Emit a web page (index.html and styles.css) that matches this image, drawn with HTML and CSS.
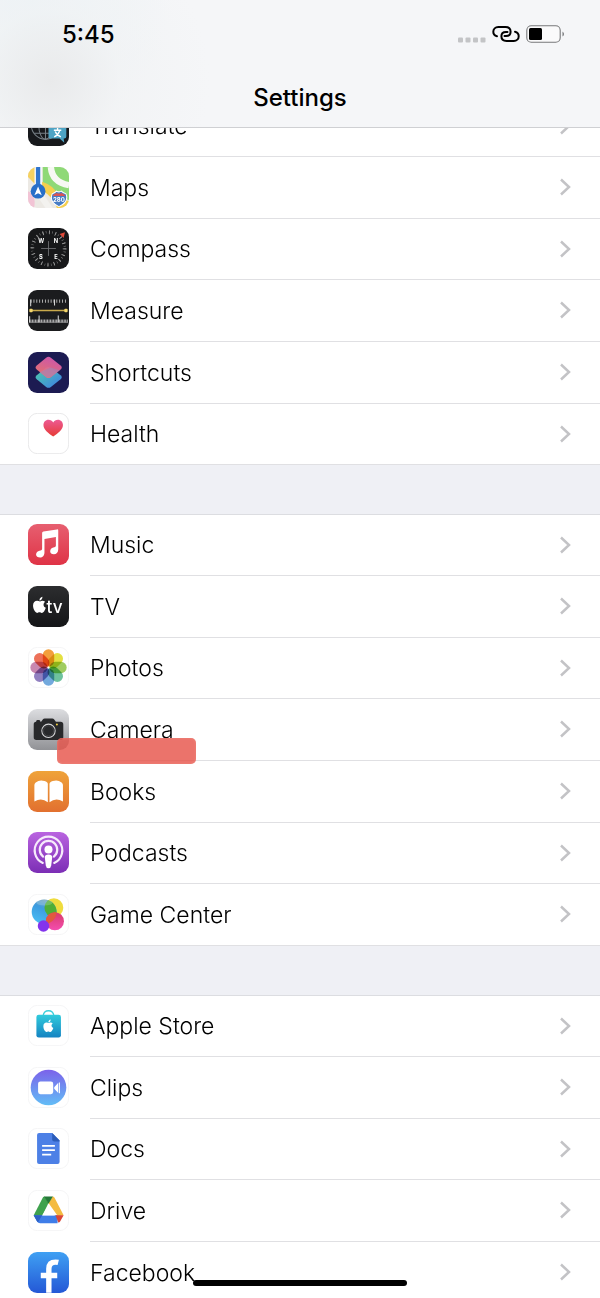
FILE: index.html
```html
<!DOCTYPE html>
<html lang="en">
<head>
    <meta charset="UTF-8">
    <meta name="viewport" content="width=device-width, initial-scale=1.0">
    <title>Settings</title>
    <link rel="stylesheet" href="styles.css">
</head>
<body>
    <header class="header">
        <div class="status">
            <span class="time">5:45</span>
            <div class="status-icons">
                <svg class="signal" viewBox="0 0 28 6"><g fill="#c3c4c6"><rect width="5" height="5" rx="1" y=".5"/><rect x="7.500" width="5" height="5" rx="1" y=".5"/><rect x="15" width="5" height="5" rx="1" y=".5"/><rect x="22.500" width="5" height="5" rx="1" y=".5"/></g></svg>
                <svg class="link" viewBox="0 0 28 18" fill="none" stroke="#000" stroke-width="2" stroke-linecap="round"><path d="M5 11.300C2.500 10.700 1.300 9 1.300 6.800 1.300 4 3.400 2 6.200 2h7.200c3.200 0 5.200 2 5.200 4.700 0 2.900-2.100 4.300-4.600 4.300H12.500"/><path d="M23 6.700c2.500.6 3.700 2.300 3.700 4.500 0 2.800-2.100 4.800-4.900 4.800h-7.200c-3.200 0-5.200-2-5.200-4.700 0-2.900 2.100-4.300 4.600-4.300h1.500"/></svg>
                <svg class="battery" viewBox="0 0 39 18"><rect x=".8" y=".8" width="33.400" height="16.400" rx="4.500" fill="#fafafb" stroke="#77787a" stroke-width="1.100"/><rect x="3" y="3" width="13" height="12" rx="1.500"/><path d="M36.500 6.500q1.500 1 1.500 2.500t-1.500 2.500z" fill="#77787a"/></svg>
            </div>
        </div>
        <h1 class="title">Settings</h1>
    </header>

    <main class="settings">
        <nav class="group">
            <a class="row" href="#translate">
                <svg class="icon" viewBox="0 0 122 122"><rect width="122" height="122" rx="27" fill="#17191c"/><g fill="none" stroke="#788087" stroke-width="3"><circle cx="52" cy="60" r="42"/><ellipse cx="52" cy="60" rx="20" ry="42"/><path d="M52 21v81M13 60h78M18 84h64M20 38h64"/></g><path d="M66 56h42q6 0 6 6v32q0 6-6 6h-2l2 12-14-12H66q-5 0-5-6V62q0-6 5-6z" fill="#4da3c4"/><path d="M88 68v6M77 75h22M94 77q-4 13-16 18M81 79q5 12 17 16" fill="none" stroke="#fff" stroke-width="4"/></svg>
                <span class="label">Translate</span>
                <svg class="chevron" viewBox="0 0 12 18"><path d="M2 1.500 10 9l-8 7.500"/></svg>
            </a>
            <a class="row" href="#maps">
                <svg class="icon" viewBox="0 0 122 122">
                    <clipPath id="tile"><rect width="122" height="122" rx="27"/></clipPath>
                    <g clip-path="url(#tile)">
                        <rect width="122" height="122" fill="#ece9e4"/>
                        <path d="M44 0h78v100L44 50z" fill="#8fd977"/>
                        <path d="M0 0h22v52L0 30z" fill="#f5d160"/>
                        <path d="M0 72q26 10 18 50H0z" fill="#f2c4d5"/>
                        <path d="M24 82l28 40h22L44 78z" fill="#f3f2ef"/>
                        <path d="M42 44q38 12 50 44l30 14v20H86Q74 88 42 70z" fill="#f6cf4e"/>
                        <path d="M68 0q4 46 54 54" fill="none" stroke="#f8f8f4" stroke-width="19"/>
                        <path d="M30 0v72" stroke="#fff" stroke-width="21"/><path d="M30 0v72" stroke="#2f75ce" stroke-width="13"/>
                        <circle cx="30" cy="72" r="22" fill="#286fc9"/><path d="M30 58l11 26-11-6-11 6z" fill="#fff"/>
                        <path d="M72 80q9-4 13-8 8 4 14 0 4 4 14 8 10 24-21 38-30-14-20-38z" fill="#477cc4" stroke="#fff" stroke-width="3"/><path d="M73 86q2-5 12-9 8 4 15 0 9 4 12 9z" fill="#d95454"/>
                        <text x="92" y="105" class="shield">280</text>
                    </g>
                </svg>
                <span class="label">Maps</span>
                <svg class="chevron" viewBox="0 0 12 18"><path d="M2 1.500 10 9l-8 7.500"/></svg>
            </a>
            <a class="row" href="#compass">
                <svg class="icon" viewBox="0 0 122 122"><rect width="122" height="122" rx="27" fill="#17181a"/><circle cx="61" cy="61" r="48" fill="none" stroke="#a8a8a8" stroke-width="11" stroke-dasharray="2.500 16.350"/><circle cx="61" cy="61" r="49" fill="none" stroke="#8a8a8a" stroke-width="7" stroke-dasharray="1.500 8.121"/><path d="M61 39v44M39 61h44" stroke="#727476" stroke-width="2.500"/><path d="M94 18l16-5-4 17z" fill="#e14a3a"/><g class="points"><text x="39" y="45">W</text><text x="83" y="45">N</text><text x="38" y="93">S</text><text x="83" y="93">E</text></g></svg>
                <span class="label">Compass</span>
                <svg class="chevron" viewBox="0 0 12 18"><path d="M2 1.500 10 9l-8 7.500"/></svg>
            </a>
            <a class="row" href="#measure">
                <svg class="icon" viewBox="0 0 122 122"><rect width="122" height="122" rx="27" fill="#1b1c1e"/><path d="M8 33h108" stroke="#c8c8c8" stroke-width="10" stroke-dasharray="2.500 6"/><path d="M8 28v20M79 28v18" stroke="#ddd" stroke-width="3"/><path d="M3 92h116" stroke="#c8c8c8" stroke-width="9" stroke-dasharray="2.500 2"/><path d="M3 96h116" stroke="#aaa" stroke-width="2"/><path d="M5 78v18M33 76v20M90 76v20" stroke="#ddd" stroke-width="3"/><path d="M12 61h100" stroke="#c9aa4c" stroke-width="4"/><rect x="4" y="56" width="10" height="10" rx="3" fill="#f3d66c"/><rect x="108" y="56" width="10" height="10" rx="3" fill="#f3d66c"/></svg>
                <span class="label">Measure</span>
                <svg class="chevron" viewBox="0 0 12 18"><path d="M2 1.500 10 9l-8 7.500"/></svg>
            </a>
            <a class="row" href="#shortcuts">
                <svg class="icon" viewBox="0 0 122 122">
                    <linearGradient id="sc-low" x1="0" y1="0" x2="1" y2="1"><stop offset="0" stop-color="#4dd0a8"/><stop offset="1" stop-color="#3e7be8"/></linearGradient>
                    <linearGradient id="sc-high" x1=".8" y1="0" x2=".3" y2="1"><stop offset="0" stop-color="#d458b4"/><stop offset="1" stop-color="#f0776e"/></linearGradient>
                    <rect width="122" height="122" rx="27" fill="#1c1b52"/>
                    <path d="M54 47q7-5 14 0l29 22q7 6 0 12l-29 23q-7 5-14 0L26 81q-7-6 0-12z" fill="url(#sc-low)"/>
                    <path d="M54 17q7-5 14 0l29 23q7 6 0 12L68 75q-7 5-14 0L26 52q-7-6 0-12z" fill="url(#sc-high)" opacity=".95"/>
                    <path d="M68 46l27 8-26 20q-8 5-16 0L34 60z" fill="#a582b4" opacity=".65"/>
                </svg>
                <span class="label">Shortcuts</span>
                <svg class="chevron" viewBox="0 0 12 18"><path d="M2 1.500 10 9l-8 7.500"/></svg>
            </a>
            <a class="row" href="#health">
                <svg class="icon" viewBox="0 0 122 122">
                    <linearGradient id="heart" x2="0" y2="1"><stop offset="0" stop-color="#ed5a94"/><stop offset="1" stop-color="#e63b35"/></linearGradient>
                    <rect class="outline strong" x="1" y="1" width="120" height="120" rx="27"/>
                    <path d="M75 70C60 60 46 50 46 36c0-9 6-16 15-16 6 0 11 3 14 8 3-5 8-8 14-8 9 0 15 7 15 16 0 14-14 24-29 34z" fill="url(#heart)"/>
                </svg>
                <span class="label">Health</span>
                <svg class="chevron" viewBox="0 0 12 18"><path d="M2 1.500 10 9l-8 7.500"/></svg>
            </a>
        </nav>

        <nav class="group">
            <a class="row" href="#music">
                <svg class="icon" viewBox="0 0 122 122">
                    <linearGradient id="music" x2="0" y2="1"><stop offset="0" stop-color="#e75f70"/><stop offset="1" stop-color="#df3346"/></linearGradient>
                    <rect width="122" height="122" rx="27" fill="url(#music)"/>
                    <path d="M42 27q0-4 4-5l40-6q4-1 4 3v56c0 10-6 15-13 15s-11-4-11-9c0-7 5-11 12-12 4-1 5-3 5-6V39l-34 6v40c0 9-6 15-13 15s-12-4-12-9c0-7 6-11 13-12 4-1 5-3 5-6z" fill="#fff"/>
                </svg>
                <span class="label">Music</span>
                <svg class="chevron" viewBox="0 0 12 18"><path d="M2 1.500 10 9l-8 7.500"/></svg>
            </a>
            <a class="row" href="#tv">
                <svg class="icon" viewBox="0 0 122 122">
                    <linearGradient id="tv" x2="0" y2="1"><stop offset="0" stop-color="#2c2d2f"/><stop offset="1" stop-color="#141517"/></linearGradient>
                    <rect width="122" height="122" rx="27" fill="url(#tv)"/>
                    <path id="apple" d="M36 46c4-3 10-3 15 1-7 5-6 15 2 18-3 9-7 15-12 15-3 0-4-2-7-2s-4 2-7 2c-6-1-12-12-12-22 0-14 11-17 21-12zM34 43c0-6 4-10 9-11 0 6-3 11-9 11z" fill="#fff"/>
                    <text x="55" y="80" class="tv-name">tv</text>
                </svg>
                <span class="label">TV</span>
                <svg class="chevron" viewBox="0 0 12 18"><path d="M2 1.500 10 9l-8 7.500"/></svg>
            </a>
            <a class="row" href="#photos">
                <svg class="icon" viewBox="0 0 122 122">
                    <rect class="outline" x="1" y="1" width="120" height="120" rx="27"/>
                    <g class="petals" transform="translate(61 61)">
                        <rect x="-17" y="-54" width="34" height="51" rx="17" fill="#f39a31"/>
                        <rect x="-17" y="-54" width="34" height="51" rx="17" fill="#e3df38" transform="rotate(45)"/>
                        <rect x="-17" y="-54" width="34" height="51" rx="17" fill="#9bc957" transform="rotate(90)"/>
                        <rect x="-17" y="-54" width="34" height="51" rx="17" fill="#66bf98" transform="rotate(135)"/>
                        <rect x="-17" y="-54" width="34" height="51" rx="17" fill="#6ba4dc" transform="rotate(180)"/>
                        <rect x="-17" y="-54" width="34" height="51" rx="17" fill="#8b79bd" transform="rotate(225)"/>
                        <rect x="-17" y="-54" width="34" height="51" rx="17" fill="#c582ac" transform="rotate(270)"/>
                        <rect x="-17" y="-54" width="34" height="51" rx="17" fill="#ec6950" transform="rotate(315)"/>
                    </g>
                </svg>
                <span class="label">Photos</span>
                <svg class="chevron" viewBox="0 0 12 18"><path d="M2 1.500 10 9l-8 7.500"/></svg>
            </a>
            <a class="row marked" href="#camera">
                <svg class="icon" viewBox="0 0 122 122">
                    <linearGradient id="camera" x2="0" y2="1"><stop offset="0" stop-color="#dcdde0"/><stop offset="1" stop-color="#919296"/></linearGradient>
                    <rect width="122" height="122" rx="27" fill="url(#camera)"/>
                    <path d="M24 38q0-5 4-5h5q4 0 4 5h2l5-7q2-3 6-3h22q4 0 6 3l5 7h14q8 0 8 8v38q0 8-8 8H25q-8 0-8-8V46q0-8 7-8z" fill="#28292b"/>
                    <circle cx="61" cy="65" r="20" fill="none" stroke="#d4d5d7" stroke-width="3"/><circle cx="61" cy="65" r="15" fill="none" stroke="#4c4e51" stroke-width="2"/><circle cx="86" cy="46" r="3" fill="#f0ce46"/>
                </svg>
                <span class="label">Camera</span>
                <svg class="chevron" viewBox="0 0 12 18"><path d="M2 1.500 10 9l-8 7.500"/></svg>
            </a>
            <a class="row" href="#books">
                <svg class="icon" viewBox="0 0 122 122">
                    <linearGradient id="books" x2="0" y2="1"><stop offset="0" stop-color="#efa33a"/><stop offset="1" stop-color="#e2702f"/></linearGradient>
                    <rect width="122" height="122" rx="27" fill="url(#books)"/>
                    <path d="M59 93Q40 78 19 91V42q0-5 4-8 12-9 26-4 10 3 10 9zM64 93q19-15 40-2V42q0-5-4-8-12-9-26-4-10 3-10 9z" fill="#fff"/>
                </svg>
                <span class="label">Books</span>
                <svg class="chevron" viewBox="0 0 12 18"><path d="M2 1.500 10 9l-8 7.500"/></svg>
            </a>
            <a class="row" href="#podcasts">
                <svg class="icon" viewBox="0 0 122 122">
                    <linearGradient id="podcasts" x2="0" y2="1"><stop offset="0" stop-color="#b964e0"/><stop offset="1" stop-color="#7c2eb5"/></linearGradient>
                    <rect width="122" height="122" rx="27" fill="url(#podcasts)"/>
                    <path d="M44 92a41 41 0 1 1 34 0M45 73a26 26 0 1 1 32 0" fill="none" stroke="#f6ebfb" stroke-width="6.500" stroke-linecap="round"/>
                    <circle cx="61" cy="52" r="12" fill="#fff"/><path d="M50 75q0-8 11-8t11 8l-3 25q-1 8-8 8t-8-8z" fill="#fff"/>
                </svg>
                <span class="label">Podcasts</span>
                <svg class="chevron" viewBox="0 0 12 18"><path d="M2 1.500 10 9l-8 7.500"/></svg>
            </a>
            <a class="row" href="#game-center">
                <svg class="icon" viewBox="0 0 122 122">
                    <linearGradient id="gc-blue" x1=".7" x2=".3" y2="1"><stop offset="0" stop-color="#7ba5b5"/><stop offset=".4" stop-color="#3d9ce0"/><stop offset="1" stop-color="#49bdf4"/></linearGradient>
                    <linearGradient id="gc-pink" x2="0" y2="1"><stop offset="0" stop-color="#d83b68"/><stop offset="1" stop-color="#f44db0"/></linearGradient>
                    <clipPath id="gc-clip"><circle cx="48" cy="53" r="37"/></clipPath>
                    <rect class="outline" x="1" y="1" width="120" height="120" rx="27"/>
                    <circle cx="77" cy="41" r="28" fill="#efdc3e"/>
                    <circle cx="48" cy="53" r="37" fill="url(#gc-blue)"/>
                    <circle cx="77" cy="41" r="28" fill="#4fae36" clip-path="url(#gc-clip)"/>
                    <circle cx="80" cy="81" r="27" fill="url(#gc-pink)"/>
                    <circle cx="80" cy="81" r="27" fill="#e2583f" clip-path="url(#gc-clip)"/>
                    <circle cx="46" cy="95" r="17" fill="#8334ec"/>
                    <ellipse cx="49" cy="26" rx="24" ry="8" fill="#fff" opacity=".2"/>
                </svg>
                <span class="label">Game Center</span>
                <svg class="chevron" viewBox="0 0 12 18"><path d="M2 1.500 10 9l-8 7.500"/></svg>
            </a>
        </nav>

        <nav class="group">
            <a class="row" href="#apple-store">
                <svg class="icon" viewBox="0 0 122 122">
                    <linearGradient id="store" x2="0" y2="1"><stop offset="0" stop-color="#30cbdc"/><stop offset="1" stop-color="#1583c2"/></linearGradient>
                    <rect class="outline" x="1" y="1" width="120" height="120" rx="27"/>
                    <path d="M45 32q2-15 16-15t16 15" fill="none" stroke="#3bd0dc" stroke-width="4"/>
                    <rect x="25" y="29" width="73" height="68" rx="7" fill="url(#store)"/>
                    <use href="#apple" transform="translate(34 18) scale(.78)"/>
                </svg>
                <span class="label">Apple Store</span>
                <svg class="chevron" viewBox="0 0 12 18"><path d="M2 1.500 10 9l-8 7.500"/></svg>
            </a>
            <a class="row" href="#clips">
                <svg class="icon" viewBox="0 0 122 122">
                    <linearGradient id="clips" x2="0" y2="1"><stop offset="0" stop-color="#7b62ea"/><stop offset="1" stop-color="#62bdf6"/></linearGradient>
                    <rect class="outline" x="1" y="1" width="120" height="120" rx="27"/>
                    <circle cx="61" cy="61" r="53" fill="url(#clips)"/>
                    <rect x="30" y="43" width="45" height="38" rx="7" fill="#fff"/><path d="M78 60l12-13v30L78 65zM92 46h3v32h-3z" fill="#fff"/>
                </svg>
                <span class="label">Clips</span>
                <svg class="chevron" viewBox="0 0 12 18"><path d="M2 1.500 10 9l-8 7.500"/></svg>
            </a>
            <a class="row" href="#docs">
                <svg class="icon" viewBox="0 0 122 122">
                    <rect class="outline" x="1" y="1" width="120" height="120" rx="27"/>
                    <path d="M33 15h39l22 22v64q0 6-6 6H33q-6 0-6-6V21q0-6 6-6z" fill="#4d80e6"/><path d="M72 15l22 22v3H78q-6 0-6-6z" fill="#2c5cb8"/>
                    <path d="M42 53h38M42 66h38M42 79h27" stroke="#fff" stroke-width="5"/>
                </svg>
                <span class="label">Docs</span>
                <svg class="chevron" viewBox="0 0 12 18"><path d="M2 1.500 10 9l-8 7.500"/></svg>
            </a>
            <a class="row" href="#drive">
                <svg class="icon" viewBox="0 0 122 122">
                    <rect class="outline" x="1" y="1" width="120" height="120" rx="27"/>
                    <path d="M45 21q2-2 5-2l11 20-28 57q-3-1-5-4L17 75z" fill="#3fa24e"/>
                    <path d="M73 19q4 0 6 4l27 52-17 3-28-39z" fill="#f4bb41"/>
                    <path d="M48 19h26L61 41z" fill="#26793a"/>
                    <path d="M17 75h71v24H36q-6 0-9-5z" fill="#3f7de8"/>
                    <path d="M17 75h25L30 96q-3-2-5-6z" fill="#2e61c5"/>
                    <path d="M82 75h24L96 93q-2 4-6 4z" fill="#db4637"/>
                    <path d="M61 45l19 31H42z" fill="#fff"/>
                </svg>
                <span class="label">Drive</span>
                <svg class="chevron" viewBox="0 0 12 18"><path d="M2 1.500 10 9l-8 7.500"/></svg>
            </a>
            <a class="row" href="#facebook">
                <svg class="icon" viewBox="0 0 122 122">
                    <linearGradient id="facebook" x2="0" y2="1"><stop offset="0" stop-color="#3fa0f3"/><stop offset="1" stop-color="#2458d6"/></linearGradient>
                    <rect width="122" height="122" rx="27" fill="url(#facebook)"/>
                    <path d="M62 121V50q0-20 20-20 4 0 8 1M38 70h49" fill="none" stroke="#fff" stroke-width="16"/>
                </svg>
                <span class="label">Facebook</span>
                <svg class="chevron" viewBox="0 0 12 18"><path d="M2 1.500 10 9l-8 7.500"/></svg>
            </a>
        </nav>
    </main>

    <div class="home-bar"></div>
</body>
</html>
```
FILE: styles.css
```css
* {
    box-sizing: border-box;
}

body {
    margin: 0;
    height: 100vh;
    overflow: hidden;
    background-color: #eff0f5;
    font-family: Inter, "Liberation Sans", sans-serif;
    color: #000;
}

.header {
    position: fixed;
    top: 0;
    left: 0;
    right: 0;
    z-index: 2;
    border-bottom: 1px solid #cfd0d3;
    background: radial-gradient(circle at 50px 80px, #e9eaeb, rgba(240, 242, 243, 0.6) 70px, transparent 160px),
        radial-gradient(circle at 30px 0, #ecf3f7, transparent 140px), #f5f6f8;
}

.status {
    display: flex;
    align-items: center;
    justify-content: space-between;
    height: 68px;
    padding: 0 35px 0 62px;
}

.time {
    font-size: 24px;
    font-weight: 500;
}

.status-icons {
    display: flex;
    align-items: center;
    gap: 6px;
}

.signal {
    width: 28px;
    height: 6px;
    margin-top: 12px;
}

.link {
    width: 28px;
    height: 18px;
}

.battery {
    width: 39px;
    height: 18px;
}

.title {
    margin: 0;
    font-size: 24px;
    font-weight: 500;
    line-height: 59px;
    text-align: center;
}

/* list sits partly under the header */
.settings {
    padding-top: 95px;
}

.group {
    margin-bottom: 49px;
    background-color: #fff;
}

.row {
    position: relative;
    display: grid;
    grid-template-columns: 62px 1fr 41px;
    align-items: center;
    height: 62px;
    padding: 0 0 2px 28px;
    color: inherit;
    text-decoration: none;
    background: linear-gradient(#e0e0e3, #e0e0e3) 90px 100% / 100% 1px no-repeat;
}

.row:nth-child(3n) {
    height: 61px;
}

.row:first-child {
    border-top: 1px solid #dcdde1;
}

.row:last-child {
    background-position: 0 100%;
}

.icon {
    width: 41px;
    height: 41px;
}

.label {
    padding-top: 1px;
    font-size: 23px;
    font-weight: 300;
    line-height: 28px;
}

.chevron {
    width: 12px;
    height: 18px;
    fill: none;
    stroke: #c3c3c6;
    stroke-width: 2.5px;
}

.outline {
    fill: #fff;
    stroke: #f0f0f1;
    stroke-width: 2px;
}

.outline.strong {
    stroke: #dedee0;
}

.petals rect {
    mix-blend-mode: multiply;
    opacity: 0.95;
}

.shield {
    font-size: 18px;
    font-weight: 700;
    fill: #fff;
    text-anchor: middle;
}

.points {
    font-size: 17px;
    font-weight: 700;
    fill: #fff;
    text-anchor: middle;
}

.tv-name {
    font-size: 51px;
    font-weight: 500;
    fill: #fff;
}

/* marker stroke */
.marked::after {
    content: "";
    position: absolute;
    z-index: 1;
    left: 57px;
    bottom: -3px;
    width: 139px;
    height: 26px;
    border-radius: 5px;
    background-color: rgba(231, 84, 75, 0.82);
    box-shadow: inset 0 0 3px rgba(240, 140, 130, 0.8);
}

.home-bar {
    position: fixed;
    z-index: 2;
    left: 50%;
    bottom: 12px;
    width: 214px;
    height: 6px;
    margin-left: -107px;
    border-radius: 3px;
    background-color: #000;
}
```
